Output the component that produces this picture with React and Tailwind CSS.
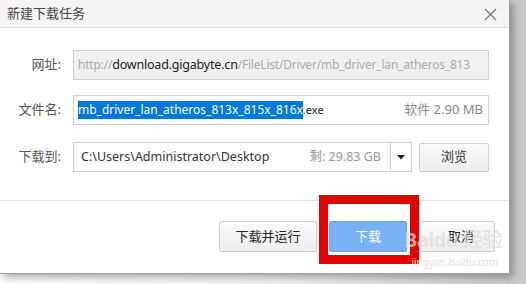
export default function App() {
  const font = { fontFamily: '"Noto Sans", "Noto Sans CJK SC", sans-serif' };
  return (
    <div className="w-[526px] h-[284px] bg-[#dcdcdc] relative overflow-hidden" style={font}>
      <div className="absolute inset-0 bg-gradient-to-r from-white via-[#f2f2f2] to-[#c8c8c8]" />
      <div className="relative w-[510px] h-[274px] bg-white border-r border-b border-[#a0a0a0] shadow-[3px_3px_8px_rgba(0,0,0,0.35)] flex flex-col">
        <div className="h-[28px] bg-[#f5f5f5] border-b border-[#dcdcdc] flex items-center justify-between pl-[7px] pr-[12px] shrink-0">
          <span className="text-[13px] text-[#444]">新建下载任务</span>
          <svg width="13" height="13" viewBox="0 0 13 13" className="mt-[1px]">
            <path d="M1 1 L12 12 M12 1 L1 12" stroke="#777" strokeWidth="1.1" />
          </svg>
        </div>
        <div className="flex flex-col pt-[22px] h-[173px] shrink-0 border-b border-[#e5e5e5]">
          <div className="flex items-center h-[30px]">
            <div className="w-[62px] text-right text-[13px] text-[#555] pr-[1px]">网址:</div>
            <div className="ml-[11px] w-[416px] h-[30px] bg-[#f0f0f0] border border-[#cfcfcf] flex items-center pl-[4px] text-[12px] tracking-[-0.2px] whitespace-nowrap overflow-hidden">
              <span className="text-[#aaa]">http://</span>
              <span className="text-[#222] text-[12.5px]">download.gigabyte.cn</span>
              <span className="text-[#aaa]">/FileList/Driver/mb_driver_lan_atheros_813</span>
            </div>
          </div>
          <div className="flex items-center h-[30px] mt-[15px]">
            <div className="w-[62px] text-right text-[13px] text-[#555] pr-[1px]">文件名:</div>
            <div className="ml-[11px] w-[416px] h-[30px] bg-white border border-[#cfcfcf] flex items-center pl-[4px] pr-[5px] text-[12px] whitespace-nowrap overflow-hidden">
              <span className="bg-[#0078d7] text-white leading-[18px] text-[12px]">mb_driver_lan_atheros_813x_815x_816x</span>
              <span className="text-[#222] text-[11px]">.exe</span>
              <span className="ml-auto text-[#888] text-[13px]">软件 2.90 MB</span>
            </div>
          </div>
          <div className="flex items-center h-[30px] mt-[17px]">
            <div className="w-[62px] text-right text-[13px] text-[#555] pr-[1px]">下载到:</div>
            <div className="ml-[11px] w-[339px] h-[30px] bg-white border border-[#cfcfcf] flex items-center text-[12.5px] whitespace-nowrap overflow-hidden">
              <span className="pl-[7px] text-[#333]">C:\Users\Administrator\Desktop</span>
              <span className="ml-auto pr-[9px] text-[#999]">剩: 29.83 GB</span>
              <div className="w-[21px] h-full border-l border-[#cfcfcf] flex items-center justify-center shrink-0">
                <svg width="8" height="5" viewBox="0 0 8 5"><path d="M0 0 L8 0 L4 4.5 Z" fill="#222" /></svg>
              </div>
            </div>
            <div className="ml-[7px] w-[70px] h-[29px] bg-gradient-to-b from-[#fafafa] to-[#eeeeee] border border-[#cfcfcf] rounded-[2px] flex items-center justify-center text-[13px] text-[#333]">浏览</div>
          </div>
        </div>
        <div className="flex-1 relative flex justify-end items-start pt-[20px] pr-[14px] gap-[12px]">
          <div className="w-[98px] h-[31px] bg-gradient-to-b from-[#fafafa] to-[#eeeeee] border border-[#cfcfcf] rounded-[2px] flex items-center justify-center text-[13px] text-[#222]">下载并运行</div>
          <div className="relative w-[78px] h-[31px]">
            <div className="absolute left-[-10px] top-[-26px] w-[100px] h-[69px] border-[9px] border-[#e60000]" />
            <div className="absolute inset-0 bg-[#78b2f5] border border-[#6aa6ec] rounded-[2px] flex items-center justify-center text-[13px] text-white">下载</div>
          </div>
          <div className="relative w-[76px] h-[31px] bg-gradient-to-b from-[#fafafa] to-[#eeeeee] border border-[#cfcfcf] rounded-[2px] flex items-center justify-center text-[13px] text-[#222]">
            <span className="ml-[8px]">取消</span>
            <span className="absolute right-[-8px] top-[8px] text-[20px] font-bold text-[#dddddd]/70 leading-[20px] tracking-tight whitespace-nowrap pointer-events-none">Baidu 经验</span>
            <span className="absolute right-[-4px] top-[34px] text-[10px] text-[#e3e3e3] leading-[12px] whitespace-nowrap pointer-events-none">jingyan.baidu.com</span>
          </div>
        </div>
      </div>
    </div>
  );
}
